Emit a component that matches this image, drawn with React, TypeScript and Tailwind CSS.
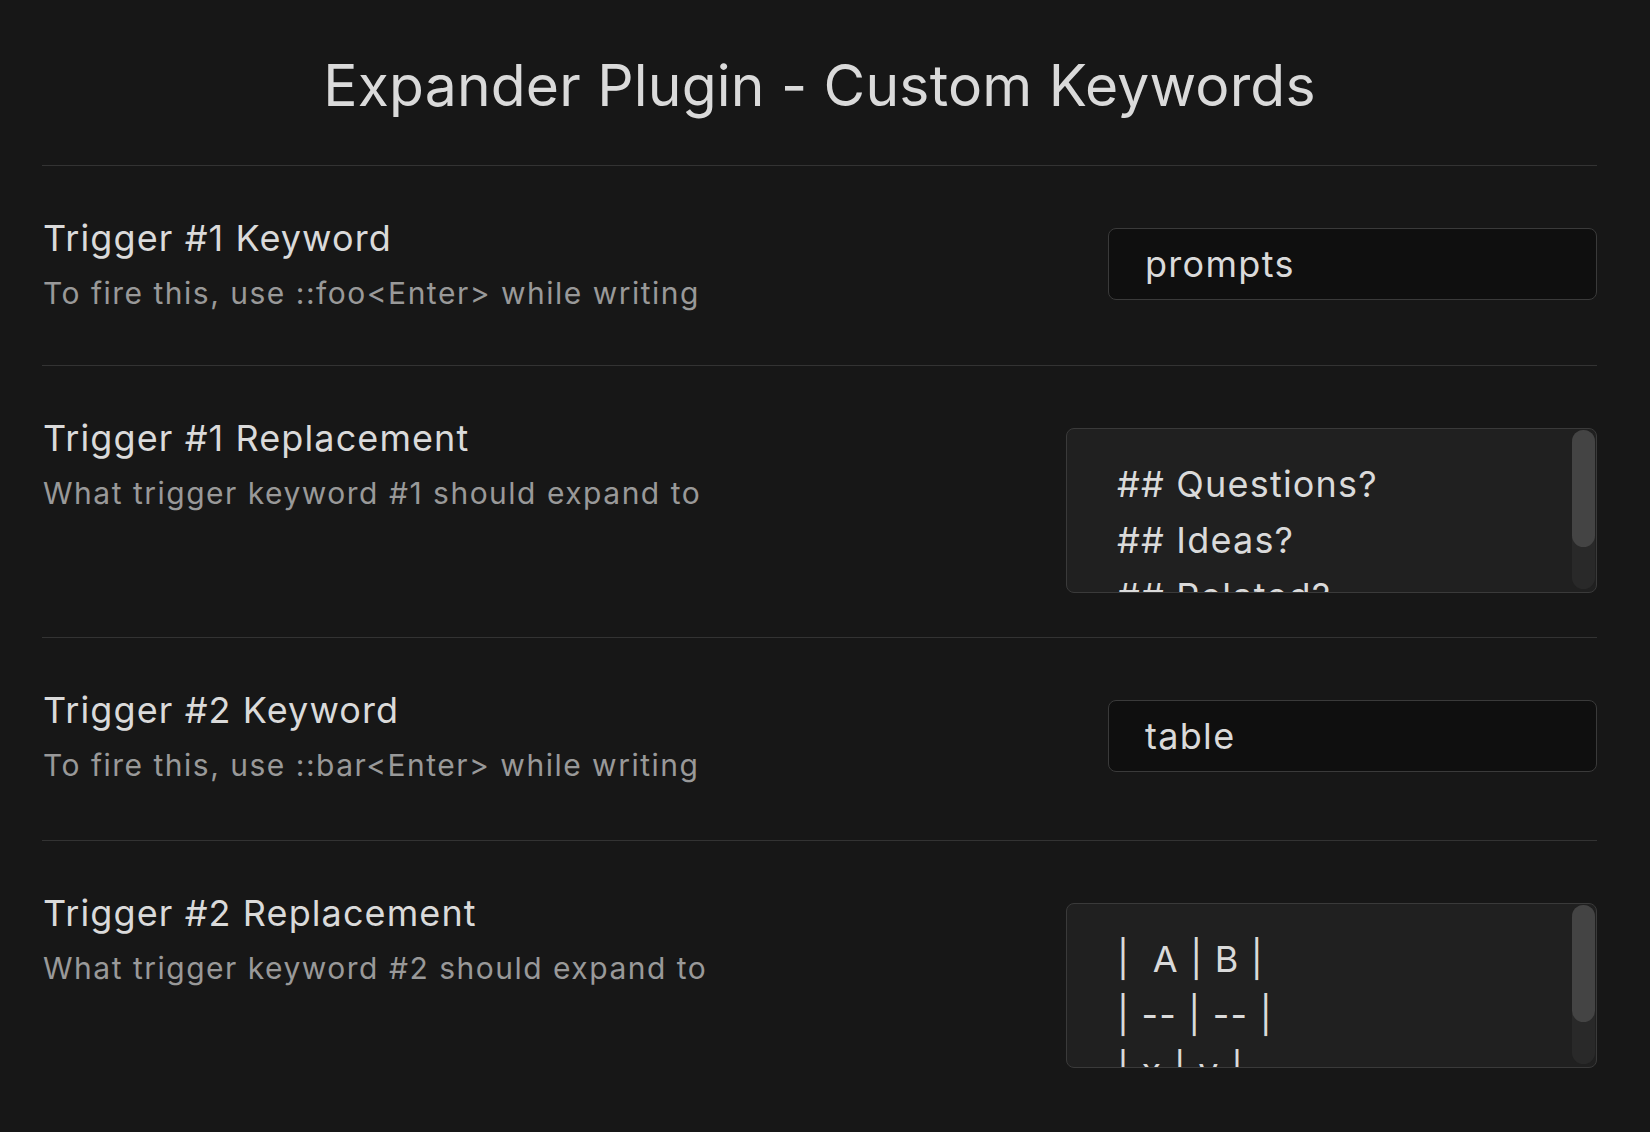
import type { ReactNode } from 'react';

const FONT = { fontFamily: 'Inter, "Noto Sans", sans-serif' };

function Info({ title, desc }: { title: string; desc: string }) {
  return (
    <div className="flex flex-col pl-px">
      <div className="text-[36px] leading-[46px] tracking-[1.1px] text-[#dadada]">{title}</div>
      <div className="mt-[13px] text-[30px] leading-[39px] tracking-[1.5px] text-[#999999]">{desc}</div>
    </div>
  );
}

function KeywordRow({ title, desc, value, pb }: { title: string; desc: string; value: string; pb: string }) {
  return (
    <div className={`flex items-center justify-between border-t border-[#333333] pt-[49px] ${pb}`}>
      <Info title={title} desc={desc} />
      <div className="flex h-[72px] w-[489px] items-center rounded-[8px] border border-[#3a3a3a] bg-[#0f0f0f] pl-[36px] text-[36px] tracking-[1.3px] text-[#dadada]">
        {value}
      </div>
    </div>
  );
}

function ReplacementRow({ title, desc, lines }: { title: string; desc: string; lines: ReactNode[] }) {
  return (
    <div className="flex items-start justify-between border-t border-[#333333] pt-[49px] pb-[44px]">
      <Info title={title} desc={desc} />
      <div className="mt-[13px] flex h-[165px] w-[531px] overflow-hidden rounded-[8px] border border-[#3a3a3a] bg-[#202020]">
        <div className="flex-1 overflow-hidden pt-[27px] pl-[50px] text-[36px] leading-[56px] tracking-[1.2px] whitespace-pre text-[#dadada]">
          {lines.map((l, i) => (
            <div key={i}>{l}</div>
          ))}
        </div>
        {/* scrollbar */}
        <div className="mr-[1px] mt-[1px] mb-[3px] flex w-[23px] flex-col rounded-full bg-[#292929]">
          <div className="h-[117px] rounded-full bg-[#444444]" />
        </div>
      </div>
    </div>
  );
}

export default function App() {
  return (
    <div className="min-h-[1132px] w-full bg-[#171717] pl-[42px] pr-[53px]" style={FONT}>
      <div className="pt-[51px] pb-[44px] text-center text-[57px] leading-[70px] tracking-[0.2px] text-[#dadada]">
        Expander Plugin - Custom Keywords
      </div>
      <KeywordRow
        title="Trigger #1 Keyword"
        desc="To fire this, use ::foo<Enter> while writing"
        value="prompts"
        pb="pb-[52px]"
      />
      <ReplacementRow
        title="Trigger #1 Replacement"
        desc="What trigger keyword #1 should expand to"
        lines={['## Questions?', '## Ideas?', '## Related?']}
      />
      <KeywordRow
        title="Trigger #2 Keyword"
        desc="To fire this, use ::bar<Enter> while writing"
        value="table"
        pb="pb-[55px]"
      />
      <ReplacementRow
        title="Trigger #2 Replacement"
        desc="What trigger keyword #2 should expand to"
        lines={['|  A | B |', '| -- | -- |', '| x | y |']}
      />
    </div>
  );
}
